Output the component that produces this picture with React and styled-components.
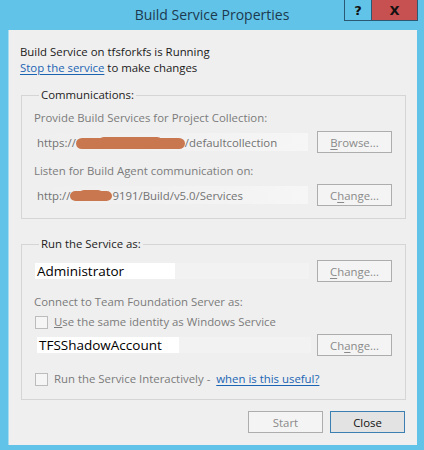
import React from 'react';
import styled, { createGlobalStyle } from 'styled-components';

const UI_FONT = '"Open Sans", "Noto Sans", "Liberation Sans", sans-serif';

const GlobalStyle = createGlobalStyle`
    html, body {
        margin: 0;
        padding: 0;
        background: #62c3e8;
    }
    body {
        font-family: ${UI_FONT};
    }
`;

const Window = styled.div`
    position: relative;
    width: 424px;
    height: 450px;
    background: #62c3e8;
    display: flex;
    flex-direction: column;
    overflow: hidden;
`;

const TitleBar = styled.div`
    height: 30px;
    display: flex;
    align-items: center;
    justify-content: center;
    font-size: 14px;
    color: #1c3a4f;
    padding-bottom: 1px;
    box-sizing: border-box;
`;

const CaptionButtons = styled.div`
    position: absolute;
    top: 0;
    right: 6px;
    display: flex;
`;

const CaptionButton = styled.div`
    height: 21px;
    width: ${props => props.wide ? '46px' : '28px'};
    box-sizing: border-box;
    display: flex;
    align-items: center;
    justify-content: center;
    background: ${props => props.danger ? '#c75050' : 'transparent'};
    border: 1px solid #2b5873;
    border-top: none;
    border-left: ${props => props.danger ? 'none' : '1px solid #2b5873'};
    font-family: "DejaVu Sans", sans-serif;
    font-weight: bold;
    font-size: 13px;
    color: #111;
`;

const Client = styled.div`
    flex: 1;
    margin: 0 7px 5px 8px;
    background: #efefef;
    border-left: 1px solid #a8dbef;
    padding: 14px 11px 0 12px;
    font-size: 11.4px;
    color: #1a1a1a;
    display: flex;
    flex-direction: column;
`;

const Status = styled.div`
    line-height: 16px;
    margin-left: -1px;
`;

const Link = styled.span`
    color: #1a64b4;
    text-decoration: underline;
    text-underline-offset: 2px;
`;

const Group = styled.fieldset`
    margin: ${props => props.first ? '11px' : '17px'} 0 0 0;
    padding: 0 13px 12px 12px;
    border: 1px solid #d5d5d5;
    min-width: 0;
    display: flex;
    flex-direction: column;
`;

const Legend = styled.legend`
    padding: 0 2px;
    margin-left: 5px;
    line-height: 16px;
    color: #222;
`;

const Caption = styled.div`
    line-height: 16px;
    color: #7b7b7b;
    margin-top: ${props => props.gap}px;
`;

const Row = styled.div`
    display: flex;
    align-items: center;
    justify-content: space-between;
    margin-top: ${props => props.gap}px;
    height: 22px;
`;

const ReadonlyField = styled.div`
    width: 274px;
    height: 18px;
    display: flex;
    align-items: center;
    padding-left: 3px;
    box-sizing: border-box;
    background: linear-gradient(to right, #efefef 0%, #f3f3f3 70%, #f6f6f6 100%);
    color: #727272;
    white-space: nowrap;
`;

const Redaction = styled.svg`
    display: block;
    flex: none;
    margin-top: 1px;
`;

const AccountField = styled.div`
    width: 274px;
    height: 16px;
    display: flex;
    align-items: center;
    margin-left: ${props => props.indent}px;
    background: linear-gradient(to right, #fff 0, #fff ${props => props.fill}px, #f2f2f2 ${props => props.fill}px);
    color: #000;
    font-size: 13.5px;
    padding-left: 2px;
    box-sizing: border-box;
`;

const Button = styled.div`
    width: 75px;
    height: 22px;
    box-sizing: border-box;
    display: flex;
    align-items: center;
    justify-content: center;
    border: 1px solid ${props => props.primary ? '#3c7fb1' : '#adadad'};
    background: ${props => props.primary ? '#e3e3e3' : '#f4f4f4'};
    color: ${props => props.primary ? '#111' : '#8a8a8a'};
    font-size: 11.4px;
    u {
        text-underline-offset: 2px;
    }
`;

const CheckRow = styled.label`
    display: flex;
    align-items: center;
    gap: 6px;
    height: 16px;
    margin-top: ${props => props.gap}px;
    color: #7b7b7b;
    line-height: 16px;
    white-space: nowrap;
`;

const Box = styled.span`
    width: 13px;
    height: 13px;
    box-sizing: border-box;
    border: 1px solid #bcbcbc;
    background: #f5f5f5;
    margin-left: 1px;
`;

const Footer = styled.div`
    display: flex;
    justify-content: flex-end;
    gap: 7px;
    margin-top: 11px;
    padding-right: 1px;
`;

// brush-stroke blot painted over part of a server address
function Blot({ width, height }) {
    const w = width;
    const h = height;
    return (
        <Redaction width={w} height={h} viewBox={`0 0 ${w} ${h}`}>
            <rect x="0" y="1" width={w} height={h - 1} rx={h / 2} fill="#c9774f" />
            <rect x={w * 0.2} y="0" width={w * 0.6} height={h} rx={h / 2} fill="#c9774f" />
        </Redaction>
    );
}

export default function App() {
    return (
        <Window>
            <GlobalStyle />
            <TitleBar>Build Service Properties</TitleBar>
            <CaptionButtons>
                <CaptionButton>?</CaptionButton>
                <CaptionButton wide danger>X</CaptionButton>
            </CaptionButtons>

            <Client>
                <Status>
                    <div>Build Service on tfsforkfs is Running</div>
                    <div><Link>Stop the service</Link> to make changes</div>
                </Status>

                <Group first>
                    <Legend>Communications:</Legend>
                    <Caption gap={7}>Provide Build Services for Project Collection:</Caption>
                    <Row gap={5}>
                        <ReadonlyField>
                            https://
                            <Blot width={109} height={12} />
                            /defaultcollection
                        </ReadonlyField>
                        <Button><u>B</u>rowse...</Button>
                    </Row>
                    <Caption gap={10}>Listen for Build Agent communication on:</Caption>
                    <Row gap={5}>
                        <ReadonlyField>
                            http://
                            <Blot width={42} height={11} />
                            9191/Build/v5.0/Services
                        </ReadonlyField>
                        <Button>C<u>h</u>ange...</Button>
                    </Row>
                </Group>

                <Group>
                    <Legend>Run the Service as:</Legend>
                    <Row gap={8}>
                        <AccountField indent={1} fill={140}>Administrator</AccountField>
                        <Button><u>C</u>hange...</Button>
                    </Row>
                    <Caption gap={12}>Connect to Team Foundation Server as:</Caption>
                    <CheckRow gap={4}>
                        <Box />
                        <span><u>U</u>se the same identity as Windows Service</span>
                    </CheckRow>
                    <Row gap={4}>
                        <AccountField indent={3} fill={142}>TFSShadowAccount</AccountField>
                        <Button>Ch<u>a</u>nge...</Button>
                    </Row>
                    <CheckRow gap={15}>
                        <Box />
                        <span>Run the Service Interactively -&nbsp;&nbsp;<Link>when is this useful?</Link></span>
                    </CheckRow>
                </Group>

                <Footer>
                    <Button>Start</Button>
                    <Button primary>Close</Button>
                </Footer>
            </Client>
        </Window>
    );
}
